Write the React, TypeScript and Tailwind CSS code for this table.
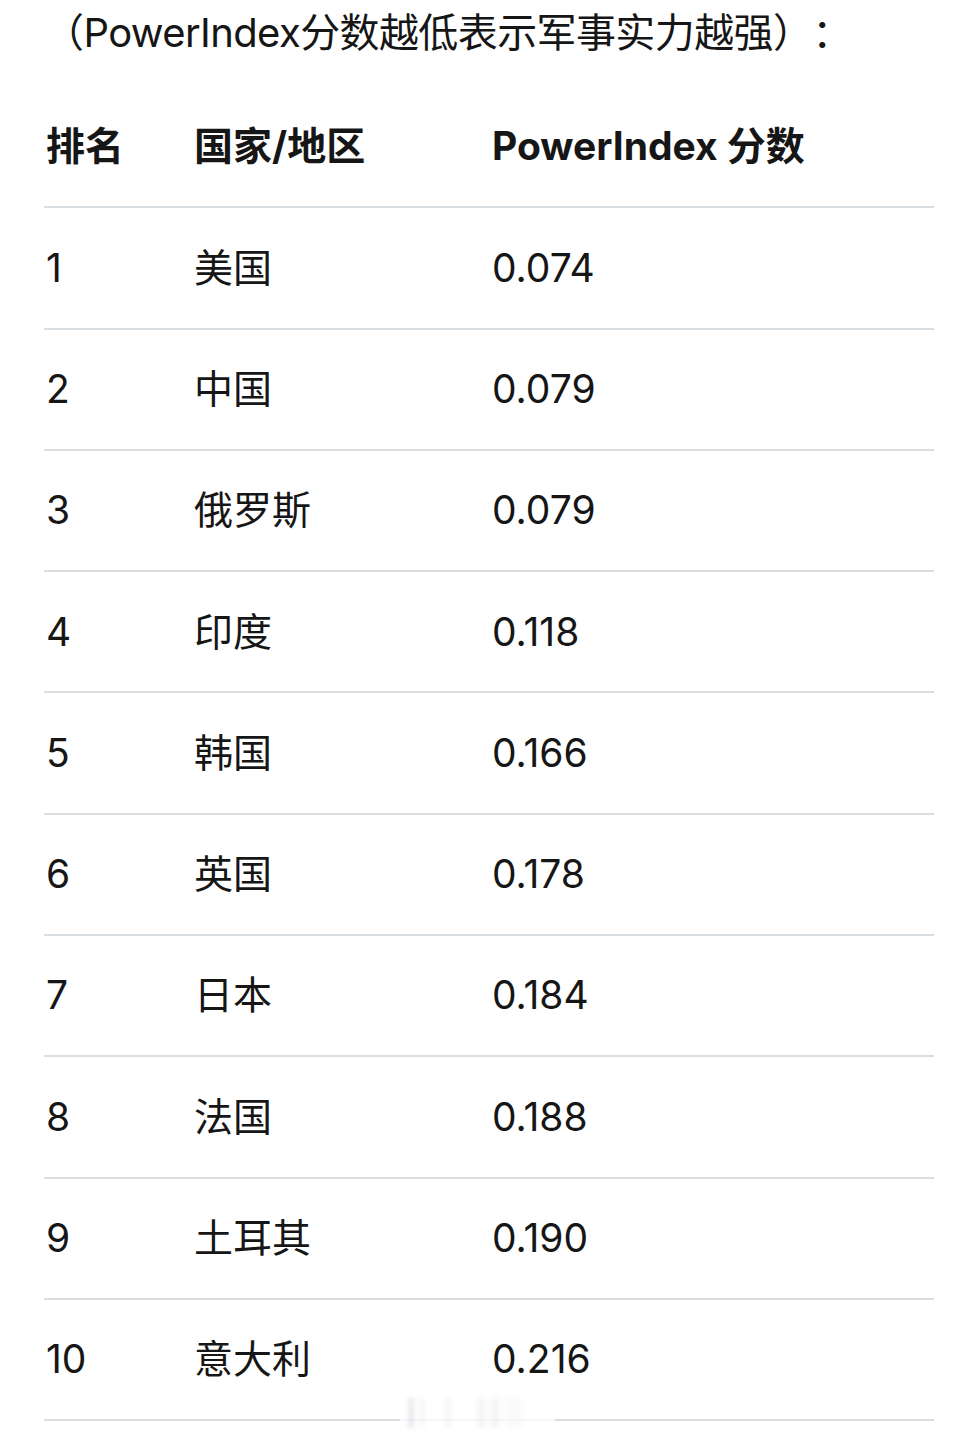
import React from 'react';

const rows: [string, string, string][] = [
  ['1', '美国', '0.074'],
  ['2', '中国', '0.079'],
  ['3', '俄罗斯', '0.079'],
  ['4', '印度', '0.118'],
  ['5', '韩国', '0.166'],
  ['6', '英国', '0.178'],
  ['7', '日本', '0.184'],
  ['8', '法国', '0.188'],
  ['9', '土耳其', '0.190'],
  ['10', '意大利', '0.216'],
];

const App = () => {
  return (
    <div
      className="relative w-[960px] h-[1435px] overflow-hidden bg-white text-[#161616] [text-spacing-trim:space-all]"
      style={{ fontFamily: 'Inter, "Noto Sans CJK SC", sans-serif' }}
    >
      {/* Caption */}
      <p className="pl-[44px] h-[66px] leading-[66px] text-[40px] tracking-[-0.6px] whitespace-nowrap">
        （PowerIndex分数越低表示军事实力越强）：
      </p>

      {/* Ranking table */}
      <div className="mt-[21px] mr-[26px] ml-[44px]">
        <div className="flex items-center h-[121.3px] border-b-2 border-[#d9dee3] text-[39px] font-bold">
          <div className="w-[150px] pl-[2px]">排名</div>
          <div className="w-[298px]">国家/地区</div>
          <div>PowerIndex 分数</div>
        </div>
        {rows.map(([rank, name, score]) => (
          <div
            key={rank}
            className="flex items-center h-[121.3px] border-b-2 border-[#d9dee3] text-[39px]"
          >
            <div className="w-[150px] pl-[2px]">{rank}</div>
            <div className="w-[298px]">{name}</div>
            <div>{score}</div>
          </div>
        ))}
      </div>

      {/* Watermark */}
      <div className="absolute left-[400px] top-[1398px] w-[155px] h-[30px] bg-white flex items-stretch gap-[6px] px-[8px] opacity-80">
        <div className="w-[6px] bg-gray-200 blur-[2px]" />
        <div className="w-[4px] bg-gray-100 blur-[2px]" />
        <div className="w-[10px]" />
        <div className="w-[5px] bg-gray-100 blur-[2px]" />
        <div className="w-[14px]" />
        <div className="w-[8px] bg-gray-100 blur-[2px]" />
        <div className="w-[8px] bg-gray-100 blur-[2px]" />
        <div className="w-[18px] bg-gray-50 blur-[2px]" />
      </div>
    </div>
  );
};

export default App;
